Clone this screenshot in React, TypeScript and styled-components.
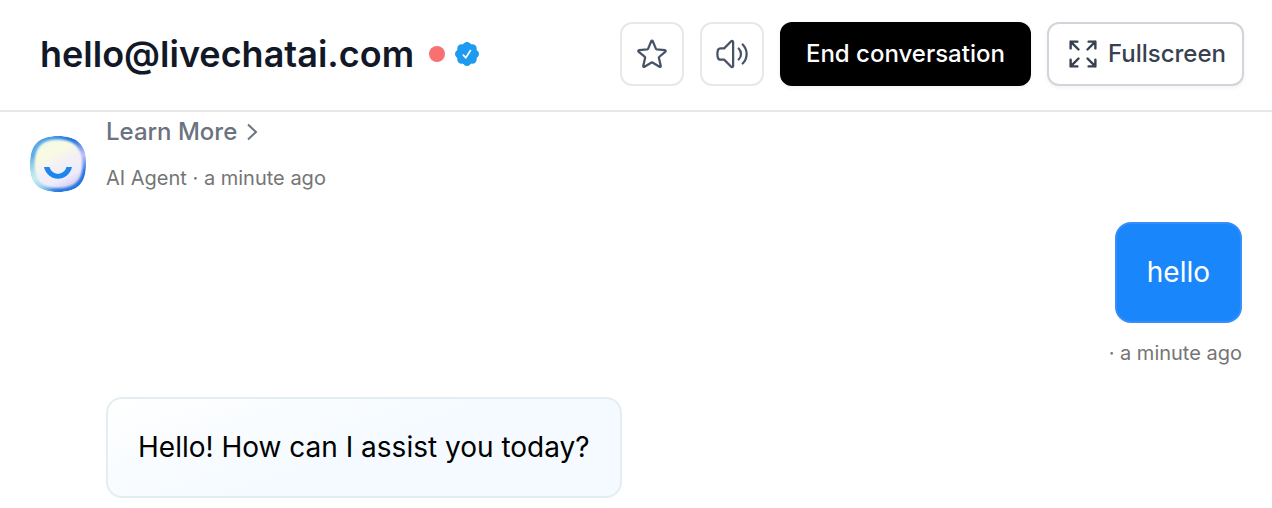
import React from "react";
import styled, { createGlobalStyle } from "styled-components";

const GlobalStyle = createGlobalStyle`
  *, *::before, *::after { box-sizing: border-box; }
  body {
    margin: 0;
    background: #fff;
    font-family: Inter, "Liberation Sans", sans-serif;
  }
  svg { display: block; flex: none; }
`;

const Header = styled.header`
  display: flex;
  align-items: center;
  justify-content: space-between;
  gap: 24px;
  padding: 22px 28px 24px 40px;
  border-bottom: 2px solid #e5e7eb;
`;

const Identity = styled.div`
  display: flex;
  align-items: center;
`;

const Title = styled.h1`
  margin: 0;
  font-size: 36px;
  line-height: 40px;
  font-weight: 600;
  color: #111827;
  white-space: nowrap;
`;

const StatusDot = styled.span`
  width: 16px;
  height: 16px;
  margin: 0 10px 0 15px;
  border-radius: 50%;
  background: #f87171;
`;

const Actions = styled.div`
  display: flex;
  gap: 16px;
`;

const BaseButton = styled.button`
  display: flex;
  align-items: center;
  justify-content: center;
  height: 64px;
  padding: 0;
  border-radius: 12px;
  background: #fff;
  font: 500 24px/32px Inter, "Liberation Sans", sans-serif;
  white-space: nowrap;
  cursor: pointer;
`;

const IconButton = styled(BaseButton)`
  width: 64px;
  border: 2px solid #e8e8e8;
  color: #475467;
`;

const TextButton = styled(BaseButton)<{ $primary?: boolean }>`
  gap: 7px;
  padding: ${(p) => (p.$primary ? "0 24px" : "0 16px")};
  border: 2px solid ${(p) => (p.$primary ? "#000" : "#d1d5db")};
  background: ${(p) => (p.$primary ? "#000" : "#fff")};
  color: ${(p) => (p.$primary ? "#fff" : "#374151")};
  box-shadow: 0 2px 4px rgba(0, 0, 0, 0.05);
`;

const Thread = styled.main`
  display: flex;
  flex-direction: column;
  padding: 0 30px 10px;
`;

const AgentRow = styled.div`
  display: flex;
  align-items: flex-end;
  gap: 20px;
`;

const AgentColumn = styled.div`
  display: flex;
  flex-direction: column;
  align-items: flex-start;
  gap: 16px;
`;

const LearnMore = styled.a`
  display: flex;
  align-items: center;
  gap: 7px;
  padding-top: 4px;
  font-size: 24px;
  line-height: 32px;
  font-weight: 500;
  color: #6b7280;
  text-decoration: none;
`;

const Meta = styled.p`
  margin: 0;
  font-size: 20px;
  line-height: 28px;
  color: #757575;
`;

const UserMessage = styled.div`
  display: flex;
  flex-direction: column;
  align-items: flex-end;
  gap: 16px;
  margin: 30px 0;
`;

const Bubble = styled.p<{ $user?: boolean }>`
  margin: 0;
  padding: 30px;
  border: 2px solid ${(p) => (p.$user ? "#378dfa" : "#e3edf2")};
  border-radius: 16px;
  background: ${(p) =>
    p.$user ? "#1a86fc" : "linear-gradient(160deg, #fff 0%, #f4faff 50%)"};
  color: ${(p) => (p.$user ? "#fff" : "#000")};
  font-size: 28px;
  line-height: 37px;
`;

const Reply = styled.div`
  display: flex;
  padding-left: 76px;
`;

function OutlineIcon({ d, weight = 1.5 }: { d: string; weight?: number }) {
  return (
    <svg width="36" height="36" viewBox="0 0 24 24" fill="none" stroke="currentColor"
      strokeWidth={weight} strokeLinecap="round" strokeLinejoin="round" aria-hidden="true">
      <path d={d} />
    </svg>
  );
}

const STAR =
  "M11.48 3.499a.562.562 0 011.04 0l2.125 5.111a.563.563 0 00.475.345l5.518.442c.499.04.701.663.321.988l-4.204 3.602a.563.563 0 00-.182.557l1.285 5.385a.562.562 0 01-.84.61l-4.725-2.885a.563.563 0 00-.586 0L6.982 20.54a.562.562 0 01-.84-.61l1.285-5.386a.562.562 0 00-.182-.557l-4.204-3.602a.563.563 0 01.321-.988l5.518-.442a.563.563 0 00.475-.345L11.48 3.5z";
const SPEAKER =
  "M19.114 5.636a9 9 0 010 12.728M16.463 8.288a5.25 5.25 0 010 7.424M6.75 8.25l4.72-4.72a.75.75 0 011.28.53v15.88a.75.75 0 01-1.28.53l-4.72-4.72H4.51c-.88 0-1.704-.507-1.938-1.354A9.01 9.01 0 012.25 12c0-.83.112-1.633.322-2.396C2.806 8.756 3.63 8.25 4.51 8.25H6.75z";
const EXPAND =
  "M3.75 3.75v4.5m0-4.5h4.5m-4.5 0L9 9M3.75 20.25v-4.5m0 4.5h4.5m-4.5 0L9 15M20.25 3.75h-4.5m4.5 0v4.5m0-4.5L15 9m5.25 11.25h-4.5m4.5 0v-4.5m0 4.5L15 15";

function VerifiedBadge() {
  return (
    <svg width="24" height="24" viewBox="0 0 24 24" role="img" aria-label="Verified">
      <g fill="#1d9bf0">
        <circle cx="12" cy="12" r="10.4" />
        <circle cx="12" cy="4.2" r="4.2" />
        <circle cx="17.5" cy="6.5" r="4.2" />
        <circle cx="19.8" cy="12" r="4.2" />
        <circle cx="17.5" cy="17.5" r="4.2" />
        <circle cx="12" cy="19.8" r="4.2" />
        <circle cx="6.5" cy="17.5" r="4.2" />
        <circle cx="4.2" cy="12" r="4.2" />
        <circle cx="6.5" cy="6.5" r="4.2" />
      </g>
      <path d="M7.8 12.7l3 2.9 5-7.6" fill="none" stroke="#fff" strokeWidth="1.7" />
    </svg>
  );
}

function AgentAvatar() {
  const shape =
    "M28 0C48 0 56 9 56 28S48 56 28 56 0 47 0 28 8 0 28 0Z";
  return (
    <svg width="56" height="56" viewBox="0 0 56 56" role="img" aria-label="AI Agent">
      <defs>
        <linearGradient id="rim" x1="0" y1="0.5" x2="1" y2="0.65">
          <stop offset="0" stopColor="#5fabe9" />
          <stop offset="0.3" stopColor="#4a9ce8" />
          <stop offset="0.6" stopColor="#2a78e0" />
          <stop offset="1" stopColor="#2574e2" />
        </linearGradient>
        <radialGradient id="lilac" cx="0.98" cy="0.33" r="0.3">
          <stop offset="0" stopColor="#cdbffa" />
          <stop offset="1" stopColor="#cdbffa" stopOpacity="0" />
        </radialGradient>
        <radialGradient id="mint" cx="0.04" cy="0.78" r="0.42">
          <stop offset="0" stopColor="#c9f5f0" />
          <stop offset="0.4" stopColor="#b5e6ee" stopOpacity="0.85" />
          <stop offset="1" stopColor="#c9f5ee" stopOpacity="0" />
        </radialGradient>
        <linearGradient id="face" x1="0.2" y1="0.05" x2="0.7" y2="1">
          <stop offset="0" stopColor="#effae8" />
          <stop offset="0.25" stopColor="#f9fbe0" />
          <stop offset="0.5" stopColor="#f3f1f6" />
          <stop offset="0.8" stopColor="#efebfc" />
          <stop offset="1" stopColor="#d3cff0" />
        </linearGradient>
        <filter id="soft" x="-10%" y="-10%" width="120%" height="120%">
          <feGaussianBlur stdDeviation="1.2" />
        </filter>
        <clipPath id="outline"><path d={shape} /></clipPath>
      </defs>
      <g clipPath="url(#outline)">
        <path d={shape} fill="url(#rim)" />
        <path d={shape} fill="url(#lilac)" />
        <path d={shape} fill="url(#mint)" />
        <path d="M28 3.5C44 3.5 52.5 12 52.5 28S45 52 28 52 4.5 45 4.5 28 12 3.5 28 3.5Z"
          fill="url(#face)" filter="url(#soft)" />
      </g>
      <path d="M14 31H19.5C22 40 34 40 36.5 31H42C38.5 46.5 17.5 46.5 14 31Z" fill="#1d86ee" />
    </svg>
  );
}

function Chevron() {
  return (
    <svg width="16" height="20" viewBox="0 0 16 20" fill="none" stroke="currentColor"
      strokeWidth="2" aria-hidden="true">
      <path d="M4 2.5l8 7.5-8 7.5" />
    </svg>
  );
}

export default function App() {
  return (
    <>
      <GlobalStyle />
      <Header>
        <Identity>
          <Title>hello@livechatai.com</Title>
          <StatusDot />
          <VerifiedBadge />
        </Identity>
        <Actions>
          <IconButton type="button" aria-label="Star"><OutlineIcon d={STAR} /></IconButton>
          <IconButton type="button" aria-label="Sound"><OutlineIcon d={SPEAKER} /></IconButton>
          <TextButton type="button" $primary>End conversation</TextButton>
          <TextButton type="button"><OutlineIcon d={EXPAND} weight={1.6} />Fullscreen</TextButton>
        </Actions>
      </Header>
      <Thread>
        <AgentRow>
          <AgentAvatar />
          <AgentColumn>
            <LearnMore href="#">Learn More <Chevron /></LearnMore>
            <Meta>AI Agent · a minute ago</Meta>
          </AgentColumn>
        </AgentRow>
        <UserMessage>
          <Bubble $user>hello</Bubble>
          <Meta>· a minute ago</Meta>
        </UserMessage>
        <Reply>
          <Bubble>Hello! How can I assist you today?</Bubble>
        </Reply>
      </Thread>
    </>
  );
}
